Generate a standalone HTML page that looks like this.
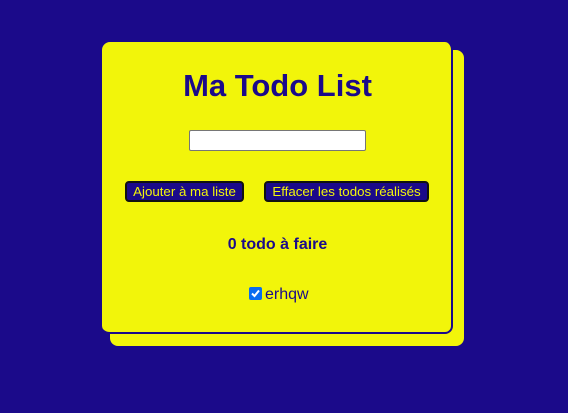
<!DOCTYPE html>
<html><head><meta charset="utf-8"><style>
html,body{margin:0;padding:0;width:568px;height:413px;background:#1b0a8a;overflow:hidden;font-family:"Liberation Sans",sans-serif;}
.shadow{position:absolute;left:110px;top:50px;width:354px;height:296px;background:#f2f50a;border-radius:8px;}
.card{position:absolute;left:102px;top:42px;width:349px;height:290px;background:#f2f50a;border-right:2px solid #1b0a8a;border-bottom:2px solid #1b0a8a;border-radius:8px;}
h1{position:absolute;left:0;width:351px;top:68px;margin:0;text-align:center;font-size:31px;line-height:36px;color:#1b0a8a;font-weight:bold;}
.inp{position:absolute;left:189px;top:130px;width:175px;height:19px;background:#fff;border:1px solid #767676;border-radius:2px;}
.btn{position:absolute;top:181px;height:17px;background:#1b0a8a;border:2px solid #111;border-radius:4px;color:#f2f50a;font-size:13.3px;line-height:17px;text-align:center;white-space:nowrap;}
.cnt{position:absolute;left:102px;width:351px;top:236px;text-align:center;font-size:16px;font-weight:bold;color:#1b0a8a;}
.cb{position:absolute;left:249px;top:287px;width:13px;height:13px;background:#0a6cf0;border-radius:2px;}
.item{position:absolute;left:265px;top:286px;font-size:16px;color:#1b0a8a;}
</style></head><body>
<div class="shadow"></div>
<div class="card"></div>
<h1 style="left:102px">Ma Todo List</h1>
<div class="inp"></div>
<div class="btn" style="left:125px;width:115px">Ajouter à ma liste</div>
<div class="btn" style="left:264px;width:161px">Effacer les todos réalisés</div>
<div class="cnt">0 todo à faire</div>
<div class="cb"><svg width="13" height="13" viewBox="0 0 13 13"><path d="M3 6.5L5.5 9L10 3.5" stroke="#fff" stroke-width="2" fill="none"/></svg></div>
<div class="item">erhqw</div>
</body></html>
